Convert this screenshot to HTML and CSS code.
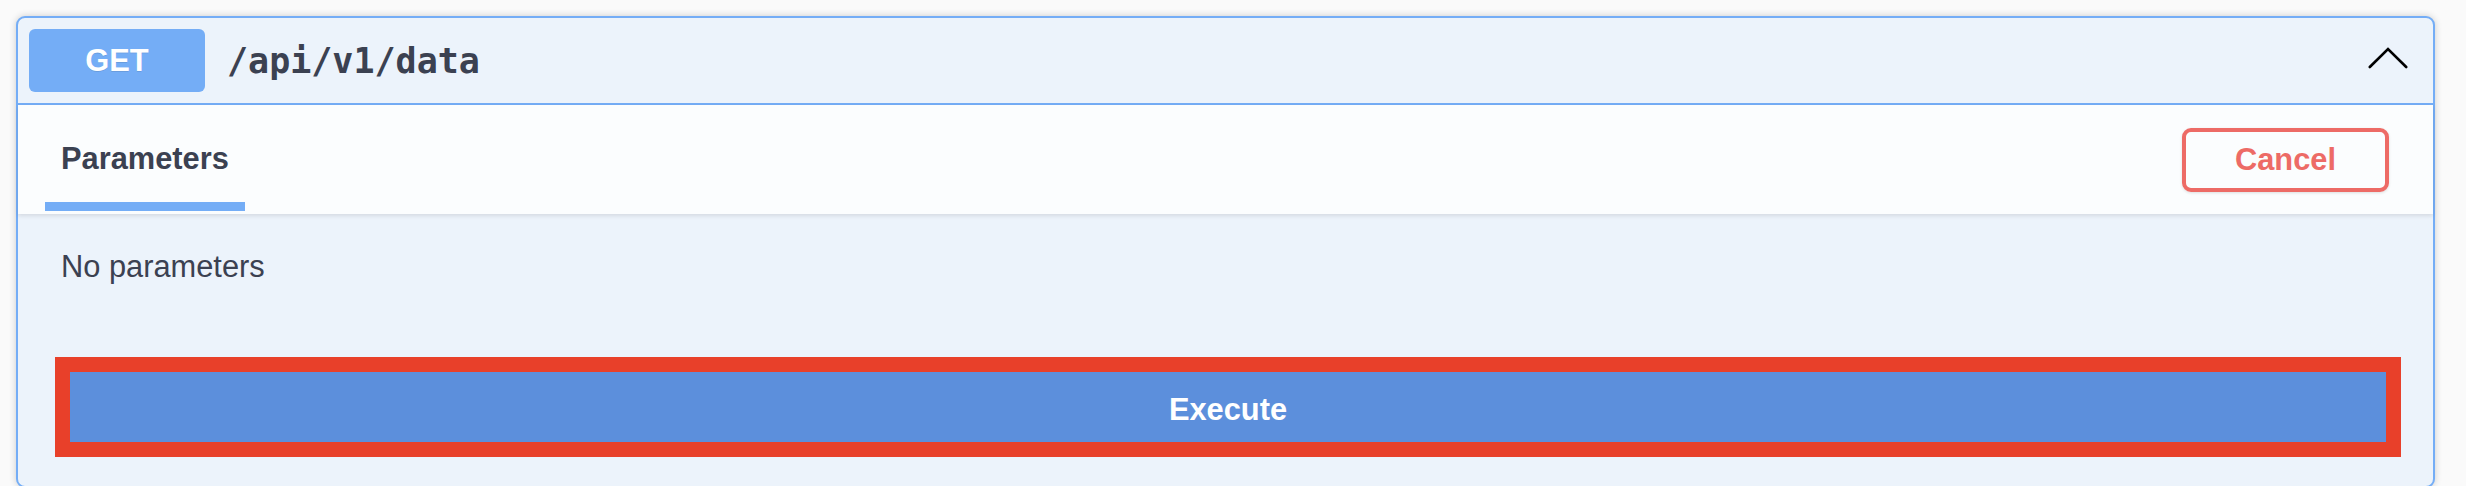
FILE: index.html
```html
<!DOCTYPE html>
<html lang="en">
<head>
<meta charset="utf-8">
<title>GET /api/v1/data</title>
<link rel="stylesheet" href="styles.css">
</head>
<body>
<div class="page">
  <div class="opblock">
    <div class="summary">
      <span class="method">GET</span>
      <span class="path">/api/v1/data</span>
      <svg class="arrow" viewBox="0 0 40 22" width="40" height="22" aria-hidden="true">
        <polyline points="1.8,20 20,2 38.2,20" fill="none" stroke="#000" stroke-width="2.6" stroke-linecap="round" stroke-linejoin="miter"/>
      </svg>
    </div>
    <div class="section-header">
      <div class="tab-item">
        <h4 class="tab-title">Parameters</h4>
        <span class="tab-underline"></span>
      </div>
      <button class="btn-cancel">Cancel</button>
    </div>
    <div class="section-body">
      <p class="no-params">No parameters</p>
      <div class="execute-wrapper">
        <button class="btn-execute">Execute</button>
      </div>
    </div>
  </div>
</div>
</body>
</html>
```
FILE: styles.css
```css
html, body {
  margin: 0;
  padding: 0;
  background: #fafafa;
}

body {
  font-family: "Liberation Sans", Arial, sans-serif;
  color: #3b4151;
}

.page {
  padding: 16px 31px 0 16px;
}

.opblock {
  border: 2px solid #74adf6;
  border-radius: 9px;
  background: #ecf3fb;
  box-shadow: 0 0 7px rgba(0, 0, 0, 0.19);
}

.summary {
  display: flex;
  align-items: center;
  padding: 11px;
  border-bottom: 2px solid #74adf6;
}

.method {
  width: 176px;
  height: 63px;
  display: flex;
  align-items: center;
  justify-content: center;
  background: #74adf6;
  border-radius: 6px;
  color: #fff;
  font-weight: 700;
  font-size: 30.8px;
  text-shadow: 0 1px 0 rgba(0, 0, 0, 0.1);
}

.path {
  flex: 1;
  margin-left: 22px;
  font-family: "DejaVu Sans Mono", "Liberation Mono", monospace;
  font-weight: 700;
  font-size: 35px;
  color: #3b4151;
}

.arrow {
  flex-shrink: 0;
  margin-right: 14px;
  margin-bottom: 6px;
}

.section-header {
  display: flex;
  justify-content: space-between;
  padding: 0 44px 0 27px;
  background: rgba(255, 255, 255, 0.8);
  box-shadow: 0 2px 4px rgba(0, 0, 0, 0.1);
}

.tab-item {
  display: flex;
  flex-direction: column;
  padding-top: 36px;
}

.tab-title {
  margin: 0;
  padding: 0 16px;
  font-size: 30.8px;
  line-height: 36px;
  font-weight: 700;
  color: #3b4151;
}

.tab-underline {
  display: block;
  height: 9px;
  margin-top: 25px;
  margin-bottom: 3px;
  background: #74adf6;
}

.btn-cancel {
  align-self: center;
  font-family: "Liberation Sans", Arial, sans-serif;
  font-weight: 700;
  font-size: 30.8px;
  line-height: 34px;
  color: #ed6b66;
  background: transparent;
  border: 4px solid #ed6b66;
  border-radius: 9px;
  padding: 11px 49px;
  box-shadow: 0 1px 3px rgba(0, 0, 0, 0.12);
}

.section-body {
  padding: 35px 0 44px;
}

.no-params {
  margin: 0 0 0 43px;
  font-size: 30.8px;
  line-height: 36px;
  color: #3b4151;
}

.execute-wrapper {
  padding: 87px 47px 0 52px;
}

.btn-execute {
  display: block;
  width: 100%;
  border: 0;
  outline: 15px solid #e8402a;
  background: #5c8fdc;
  color: #fff;
  font-family: "Liberation Sans", Arial, sans-serif;
  font-weight: 700;
  font-size: 30.8px;
  line-height: 36px;
  padding: 20px 0 14px;
}
```
